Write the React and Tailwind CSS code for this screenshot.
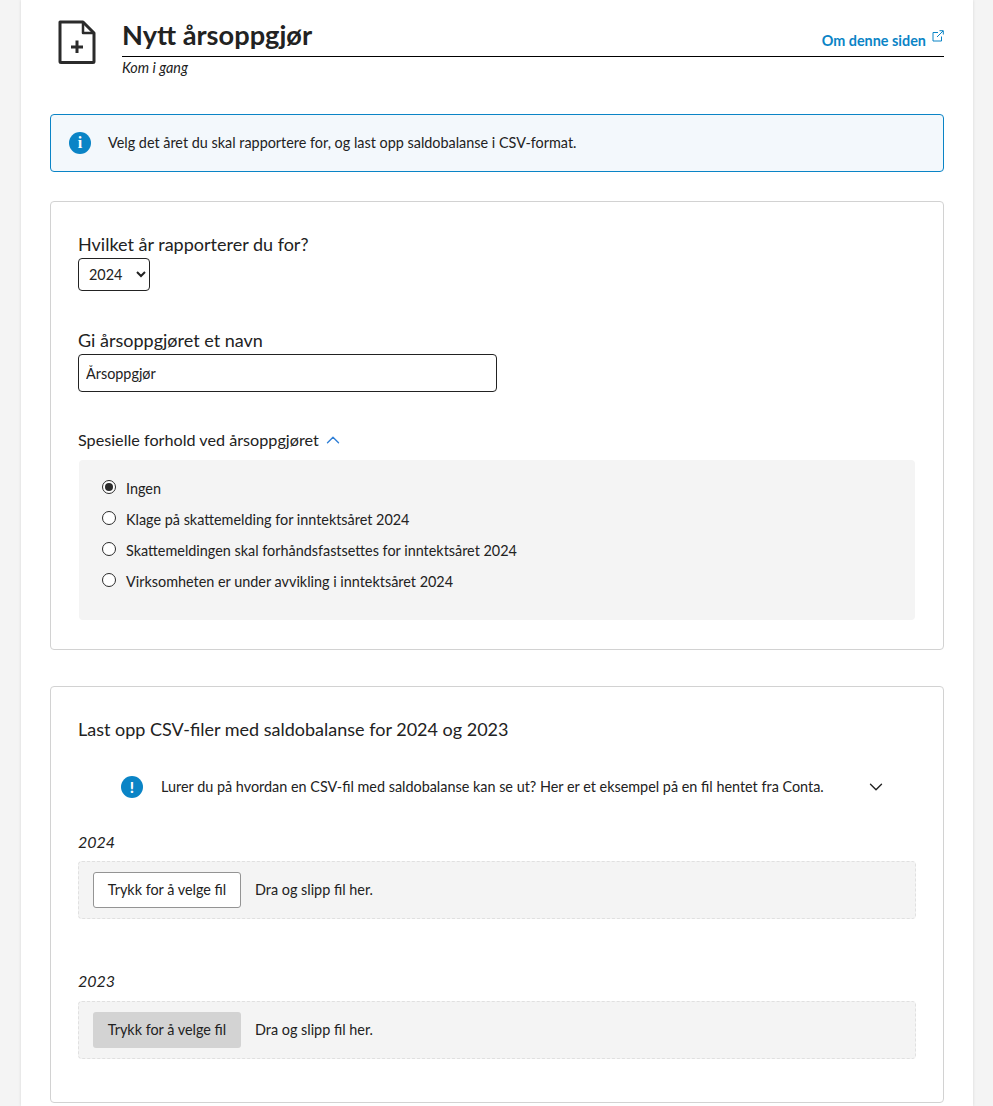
import { ChevronDown, ChevronUp } from 'lucide-react';

const options = [
    "Ingen",
    "Klage på skattemelding for inntektsåret 2024",
    "Skattemeldingen skal forhåndsfastsettes for inntektsåret 2024",
    "Virksomheten er under avvikling i inntektsåret 2024",
];

const Radio = ({ checked }) => (
    <span className="flex w-[14px] h-[14px] shrink-0 items-center justify-center rounded-full border border-[#2b2b2b] bg-white">
        {checked && <span className="block w-[8px] h-[8px] rounded-full bg-[#2b2b2b]" />}
    </span>
);

const FileDrop = ({ disabled }) => (
    <div className="flex h-[58px] items-center rounded border border-dashed border-[#e0e0e0] bg-[#f4f4f4] pl-[14px]">
        <button className={`h-[36px] w-[148px] rounded-[3px] text-[14.4px] text-[#222] ${disabled ? "bg-[#d3d3d3]" : "border border-[#949494] bg-white"}`}>
            Trykk for å velge fil
        </button>
        <span className="ml-[14px] text-[14.4px] text-[#222]">Dra og slipp fil her.</span>
    </div>
);

const App = () => {
    return (
        <div className="h-[1106px] overflow-hidden bg-[#f4f4f4] font-['Lato',sans-serif] text-[#222]">
            <div className="ml-[21px] h-full w-[952px] bg-white px-[29px] shadow-[0_0_3px_rgba(0,0,0,0.12)]">
                <header className="flex pt-[20px]">
                    <svg className="ml-[8px] h-[44px] w-[38px] shrink-0" viewBox="0 0 38 44" fill="none" stroke="#2b2b2b" strokeWidth="3" strokeLinejoin="round">
                        <path d="M2 2H25L36 13V41.5C36 42 35.5 42.5 35 42.5H3C2.500 42.500 2 42 2 41.500Z" />
                        <path d="M25 2V13H36" strokeWidth="2.500" />
                        <path d="M19 20.500V33M13 27H25" strokeWidth="3" strokeLinejoin="miter" />
                    </svg>
                    <div className="ml-[26px] flex-1">
                        <div className="flex h-[37px] items-end justify-between border-b border-black">
                            <h1 className="pb-[6px] text-[27.2px] leading-[31px] font-bold text-[#222]">Nytt årsoppgjør</h1>
                            <a className="flex items-start pb-[4px] text-[14.4px] font-bold text-[#0a84c6]">
                                Om denne siden
                                <svg className="ml-[6px] h-[12px] w-[12px]" viewBox="0 0 12 12" fill="none" stroke="#0a84c6" strokeWidth="1">
                                    <path d="M6 2.500H1V11H9.500V6.500M5 7L11 1M7.500 0.700H11.300V4.500" />
                                </svg>
                            </a>
                        </div>
                        <p className="mt-[2px] text-[14.4px] leading-[18px] italic">Kom i gang</p>
                    </div>
                </header>

                <div className="mt-[37px] flex h-[58px] items-center rounded border border-[#0a84c6] bg-[#f3f8fc] pl-[18px]">
                    <span className="flex h-[22px] w-[22px] items-center justify-center rounded-full bg-[#0a84c6] font-['Liberation_Serif',serif] text-[16px] font-bold text-white">i</span>
                    <p className="ml-[17px] text-[14.4px]">Velg det året du skal rapportere for, og last opp saldobalanse i CSV-format.</p>
                </div>

                <section className="mt-[29px] h-[449px] rounded border border-[#d2d2d2] px-[27px] pt-[31px]">
                    <label className="block text-lg leading-[22px]">Hvilket år rapporterer du for?</label>
                    <select className="mt-[3px] block h-[33px] w-[72px] rounded border border-[#222] bg-white pl-[6px] text-[14.4px]">
                        <option>2024</option>
                    </select>

                    <label className="mt-[38px] block text-lg leading-[22px]">Gi årsoppgjøret et navn</label>
                    <input className="mt-[3px] block h-[38px] w-[419px] rounded border border-[#222] bg-white pl-[7px] text-[14.4px]" defaultValue="Årsoppgjør" />

                    <div className="mt-[38px] flex h-[20px] items-center text-[16.2px] leading-[20px]">
                        Spesielle forhold ved årsoppgjøret
                        <ChevronUp className="ml-[3px] text-[#2f7fd6]" size={22} strokeWidth={1.500} />
                    </div>
                    <div className="mx-px mt-[10px] h-[160px] rounded bg-[#f4f4f4] pl-[23px] pt-[13px]">
                        {options.map((option, i) => (
                            <div key={option} className="flex h-[31px] items-center text-[14.4px]">
                                <span className="-mt-[3px]"><Radio checked={i === 0} /></span>
                                <span className="ml-[10px]">{option}</span>
                            </div>
                        ))}
                    </div>
                </section>

                <section className="mt-[36px] h-[417px] rounded border border-[#d2d2d2] px-[27px] pt-[30px]">
                    <h2 className="text-lg leading-[24px]">Last opp CSV-filer med saldobalanse for 2024 og 2023</h2>
                    <div className="mt-[34px] flex h-[24px] items-center pl-[43px]">
                        <span className="flex h-[22px] w-[22px] items-center justify-center rounded-full bg-[#0a84c6] text-[15px] font-black text-white">!</span>
                        <p className="ml-[18px] text-[14.4px]">Lurer du på hvordan en CSV-fil med saldobalanse kan se ut? Her er et eksempel på en fil hentet fra Conta.</p>
                        <ChevronDown className="ml-[41px] shrink-0" size={22} strokeWidth={1.500} />
                    </div>
                    <div className="mt-[32px] text-base leading-[22px] italic">2024</div>
                    <div className="mt-[8px]"><FileDrop /></div>
                    <div className="mt-[51px] text-base leading-[22px] italic">2023</div>
                    <div className="mt-[9px]"><FileDrop disabled /></div>
                </section>
            </div>
        </div>
    );
};

export default App;
